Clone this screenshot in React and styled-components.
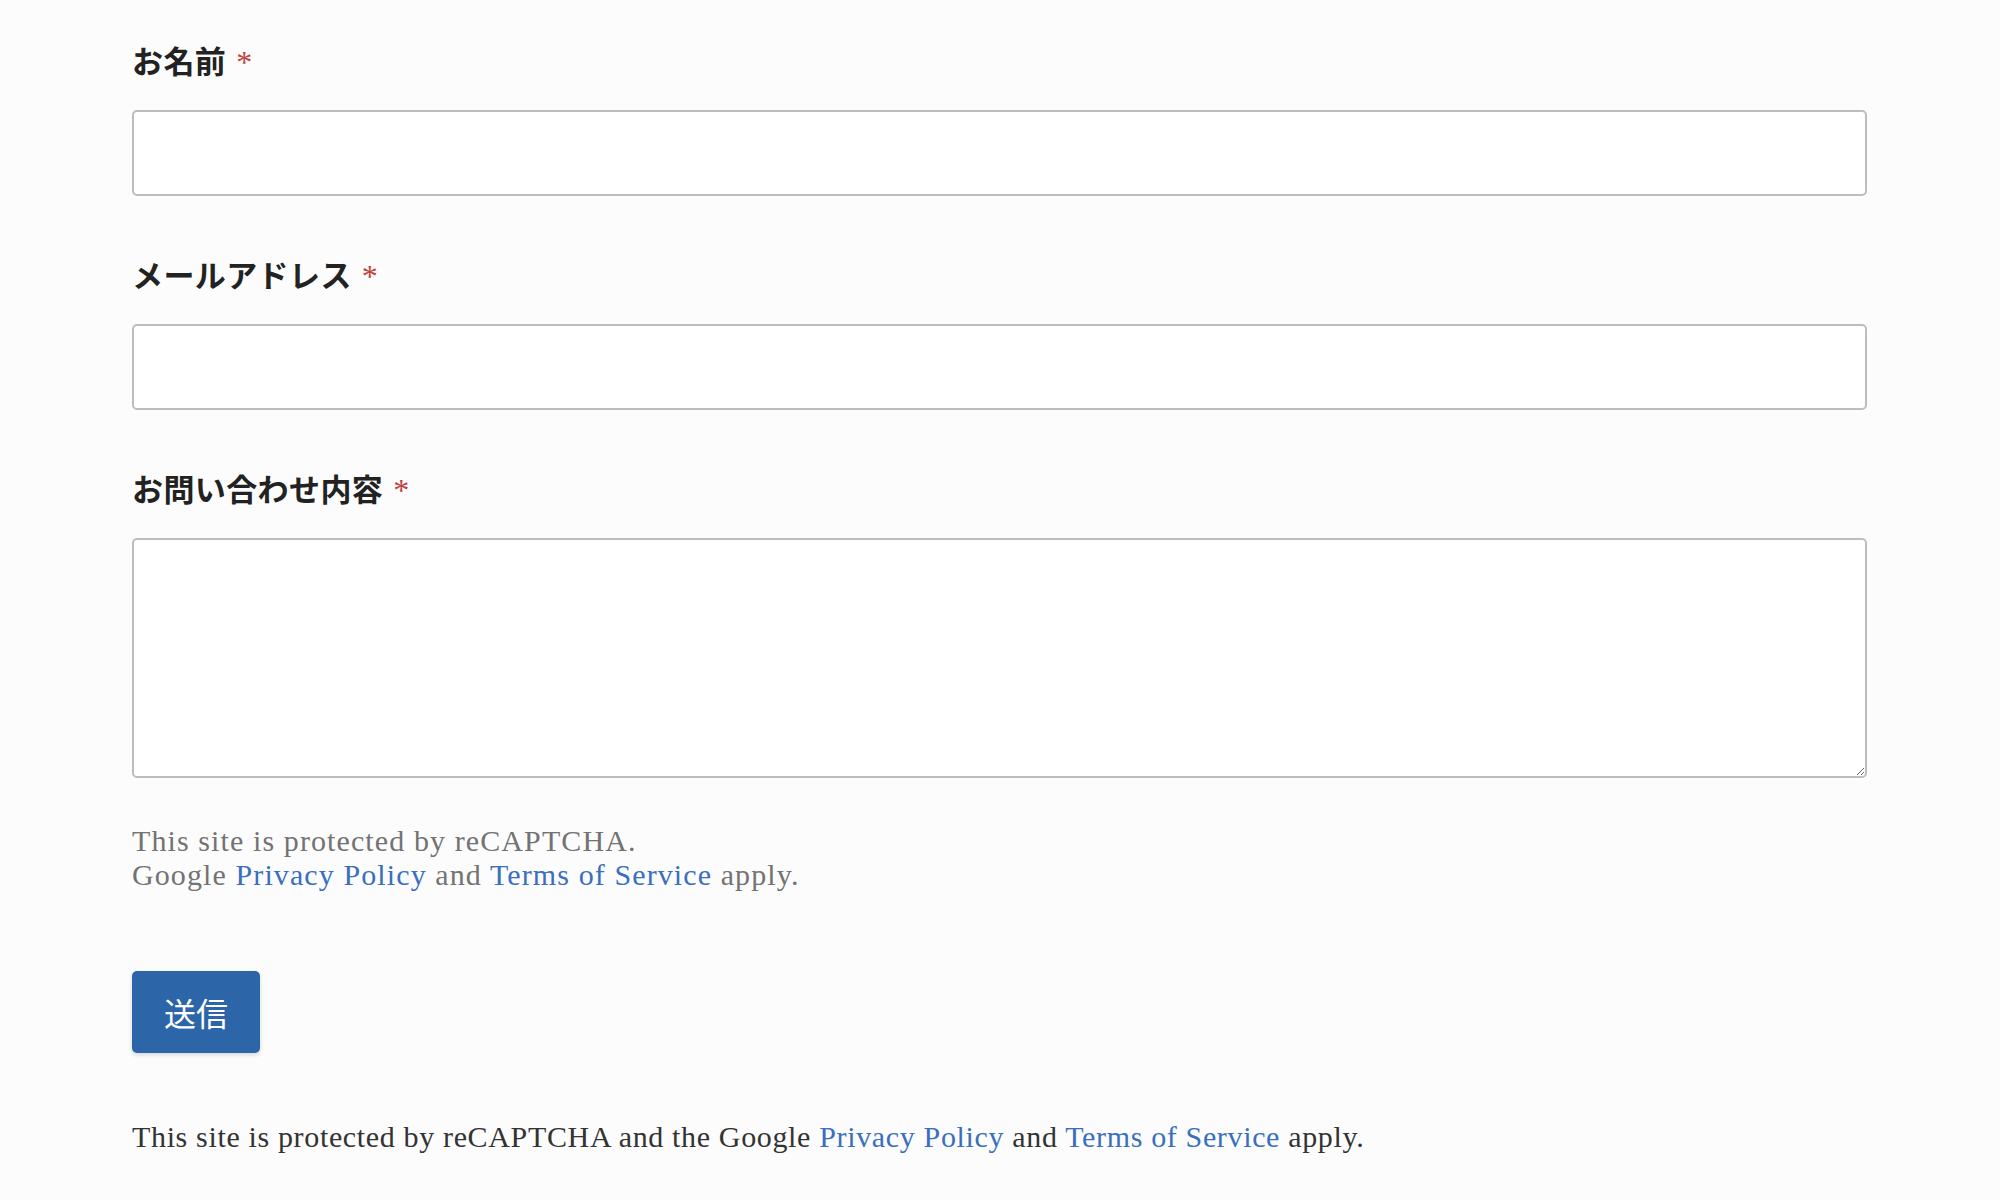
import React from "react";
import styled, { createGlobalStyle } from "styled-components";

const Global = createGlobalStyle`
  html, body { margin: 0; padding: 0; background: #fcfcfc; }
  body { font-family: "Liberation Serif", serif; color: #333; }
  * { box-sizing: border-box; }
`;

const Page = styled.main`
  padding: 40px 0 40px 132px;
  width: 1867px;
`;

const Field = styled.div`
  display: flex;
  flex-direction: column;
  margin-bottom: ${(p) => p.$gap || 58}px;
`;

const Label = styled.label`
  display: block;
  font-family: "Noto Sans CJK JP", "Noto Sans", sans-serif;
  font-weight: 700;
  font-size: 31px;
  line-height: 40px;
  letter-spacing: 0.4px;
  color: #222;
  margin-bottom: 28px;
`;

const Required = styled.span`
  font-family: "Liberation Serif", serif;
  font-weight: 400;
  color: #c0403c;
  margin-left: 10px;
  font-size: 32px;
`;

const Input = styled.input`
  display: block;
  width: 100%;
  height: 86px;
  border: 2px solid #bdbdbd;
  border-radius: 5px;
  background: #fff;
  font-size: 28px;
  padding: 0 16px;
  outline: none;
`;

const TextArea = styled.textarea`
  display: block;
  width: 100%;
  height: 240px;
  border: 2px solid #bdbdbd;
  border-radius: 5px;
  background: #fff;
  font-size: 28px;
  padding: 12px 16px;
  outline: none;
  resize: vertical;
`;

const Notice = styled.p`
  margin: 0;
  font-family: "Liberation Serif", serif;
  font-size: 30px;
  line-height: 34px;
  letter-spacing: ${(p) => p.$spacing}px;
  color: ${(p) => (p.$muted ? "#737373" : "#333")};
`;

const Link = styled.a`
  color: #3a6fbf;
  text-decoration: none;
`;

const Actions = styled.div`
  margin: 79px 0 67px;
`;

const SubmitButton = styled.button`
  display: inline-flex;
  align-items: center;
  justify-content: center;
  width: 128px;
  height: 82px;
  border: none;
  border-radius: 5px;
  background: #2c66a8;
  color: #fff;
  font-family: "Noto Sans CJK JP", "Noto Sans", sans-serif;
  font-size: 32px;
  box-shadow: 0 2px 4px rgba(0, 0, 0, 0.15);
  cursor: pointer;
`;

export default function App() {
  return (
    <>
      <Global />
      <Page>
        <Field>
          <Label>
            お名前<Required>*</Required>
          </Label>
          <Input type="text" />
        </Field>
        <Field>
          <Label>
            メールアドレス<Required>*</Required>
          </Label>
          <Input type="email" />
        </Field>
        <Field $gap={46}>
          <Label>
            お問い合わせ内容<Required>*</Required>
          </Label>
          <TextArea />
        </Field>
        <Notice $muted $spacing={1.1}>
          This site is protected by reCAPTCHA.
          <br />
          Google <Link href="#">Privacy Policy</Link> and{" "}
          <Link href="#">Terms of Service</Link> apply.
        </Notice>
        <Actions>
          <SubmitButton type="submit">送信</SubmitButton>
        </Actions>
        <Notice $spacing={0.65}>
          This site is protected by reCAPTCHA and the Google{" "}
          <Link href="#">Privacy Policy</Link> and{" "}
          <Link href="#">Terms of Service</Link> apply.
        </Notice>
      </Page>
    </>
  );
}
